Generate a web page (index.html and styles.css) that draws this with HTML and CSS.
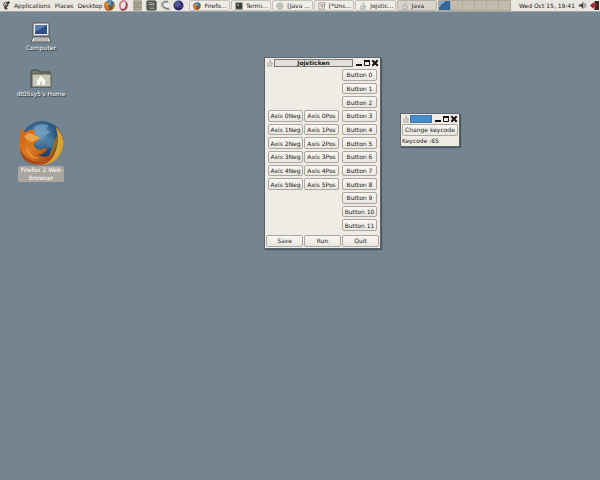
FILE: index.html
```html
<!DOCTYPE html>
<html lang="en">

<head>
    <meta charset="UTF-8">
    <meta name="viewport" content="width=device-width, initial-scale=1.0">
    <title>Desktop</title>
    <link rel="stylesheet" href="styles.css">
</head>

<body>
    <!-- shared icons -->
    <svg class="defs" aria-hidden="true">
        <defs>
            <radialGradient id="globe" cx=".45" cy=".35" r=".6">
                <stop offset="0" stop-color="#6f9fc0" />
                <stop offset=".55" stop-color="#2f5f8c" />
                <stop offset="1" stop-color="#14284a" />
            </radialGradient>
            <linearGradient id="fur" x1="0" y1="0" x2="1" y2=".6">
                <stop offset="0" stop-color="#c8641c" />
                <stop offset=".5" stop-color="#dc7a1e" />
                <stop offset="1" stop-color="#a5481a" />
            </linearGradient>
        </defs>
        <symbol id="firefox" viewBox="0 0 44 44">
            <circle cx="23" cy="21" r="20" fill="url(#globe)" />
            <path d="M16 7c3-3 9-4 13-2l-2 4 4 2-5 4-5-2-5 2-3-3z" fill="#7ba8c2" opacity=".7" />
            <path d="M27 18l6-2 3 5-4 6-5-2z" fill="#4a80a6" opacity=".7" />
            <path d="M36 7c6 5 8 12 7 18-2 11-11 18-21 18 8-3 13-9 15-17 2-7 1-13-1-19z" fill="#d9a532" />
            <path d="M38 14c1 11-4 21-13 26 5-6 8-12 9-19z" fill="#8f6a1f" />
            <path d="M3 8l4 4c3-3 6-3 8-3l1 5 5 3c-1 3-5 3-6 6 0 4 4 6 8 5l5-2c-1 5-5 7-9 7 6 4 13 2 17-4-2 9-8 14-16 14C9 43 1 34 1 23 1 17 2 12 3 8z" fill="url(#fur)" />
            <path d="M2 27c3 8 10 13 20 13-3 3-8 3-12 1-5-3-8-8-8-14z" fill="#a84917" />
            <path d="M6 16c3-4 6-4 9-2l6 3c-2 2-5 2-7 4-3 0-6-2-8-5z" fill="#eba04a" />
            <path d="M8 24c1 7 6 12 13 13-8 1-14-5-13-13z" fill="#ee9a3a" />
        </symbol>
        <symbol id="java" viewBox="0 0 10 10">
            <path d="M5 0c2 2-2 3 0 5M7 2c-1 1-1 1-1 3" fill="none" stroke="#b5a8a4" />
            <path d="M2 5h5v3H2zM7 5h1v2H7M1 9h8" fill="#dcdcdc" stroke="#a4a9ae" stroke-width=".8" />
        </symbol>
        <symbol id="min" viewBox="0 0 8 8">
            <path d="M1 6h6" stroke="#111" stroke-width="2" />
        </symbol>
        <symbol id="max" viewBox="0 0 8 8">
            <path d="M1.500 1v5.500h5V1" fill="none" stroke="#111" />
            <path d="M1 2h6" stroke="#111" stroke-width="2" />
        </symbol>
        <symbol id="close" viewBox="0 0 8 8">
            <path d="M2 2l4 4M6 2L2 6" stroke="#111" stroke-width="2" stroke-linecap="square" />
        </symbol>
    </svg>

    <header class="panel">
        <nav class="menus">
            <svg class="icon" viewBox="0 0 12 12">
                <ellipse cx="8" cy="2.500" rx="2.500" ry="1.800" fill="#333" transform="rotate(-35 8 2.500)" />
                <circle cx="2" cy="5" r=".9" fill="#333" />
                <circle cx="3" cy="3" r=".9" fill="#333" />
                <circle cx="5" cy="1.500" r=".9" fill="#333" />
                <path d="M8 6c-1-2-5-1-5 2s3 4 4 2c0-1-2-1-1-2s2-1 2-2z" fill="#555" stroke="#333" />
            </svg>
            <a href="#">Applications</a>
            <a href="#">Places</a>
            <a href="#">Desktop</a>
        </nav>
        <div class="launchers">
            <button aria-label="Firefox"><svg><use href="#firefox" /></svg></button>
            <button aria-label="Opera"><svg viewBox="0 0 12 12">
                <ellipse cx="6" cy="6" rx="4" ry="5" fill="#f0e2e2" stroke="#c9808a" stroke-width="2" />
                <path d="M3 10c4 2 7-2 6-7" fill="none" stroke="#8e3a46" stroke-width="1.500" />
            </svg></button>
            <button aria-label="Files"><svg viewBox="0 0 12 12">
                <rect x="2" y="1" width="8" height="10" fill="#b0ae98" stroke="#8b8b7a" />
                <path d="M2 4h8M2 8h8M5 6h2" stroke="#85857a" />
            </svg></button>
            <button aria-label="Editor"><svg viewBox="0 0 12 12">
                <rect x="1" y="1" width="10" height="10" rx="1" fill="#5c5f5b" stroke="#434542" />
                <path d="M3 3h4M3 5h5M4 9h5M8 3v3" stroke="#b4b8b2" />
            </svg></button>
            <button aria-label="Tools"><svg viewBox="0 0 12 12">
                <path d="M8 2C4 1 1 3 2 6s5 4 9 4" fill="none" stroke="#c8c8c4" stroke-width="3" />
                <path d="M9 2C5 1 2 3 3 6s4 3 7 4" fill="none" stroke="#555" />
            </svg></button>
            <button aria-label="Eclipse"><svg viewBox="0 0 12 12">
                <circle cx="6" cy="6" r="5.500" fill="#282863" />
                <circle cx="5" cy="4" r="3" fill="#535397" />
                <path d="M1 6h10M1 8h10" stroke="#7878ad" stroke-width=".5" />
            </svg></button>
        </div>
        <div class="tasks">
            <button><svg><use href="#firefox" /></svg>Firefo...</button>
            <button><svg viewBox="0 0 10 10">
                <rect x="1" y="1" width="8" height="8" fill="#343638" stroke="#888" />
                <path d="M3 3l2 1-2 1" fill="none" stroke="#ddd" />
            </svg>Termi...</button>
            <button><svg viewBox="0 0 10 10">
                <circle cx="5" cy="5" r="4" fill="#d8ddd7" stroke="#9ba49b" />
                <path d="M3 4h4M3 6h4" stroke="#829a92" />
            </svg>[Java ...</button>
            <button><svg viewBox="0 0 10 10">
                <path d="M1 1h7v8H1z" fill="#f5f5ef" stroke="#92948b" />
                <path d="M3 3h3M3 5h3M4 8l5-6" stroke="#8a8268" />
            </svg>[*Uns...</button>
            <button><svg><use href="#java" /></svg>Jojstic...</button>
            <button class="active"><svg><use href="#java" /></svg>Java</button>
        </div>
        <div class="pager">
            <span class="current"></span><span></span><span></span><span></span><span></span><span></span>
        </div>
        <div class="tray">
            <time>Wed Oct 15, 19:41</time>
            <svg viewBox="0 0 10 10">
                <path d="M1 4h2l3-3v8L3 6H1z" fill="#444a4e" />
                <path d="M7 3q1 2 0 4M8 2q2 3 0 6" fill="none" stroke="#778" stroke-width=".8" />
            </svg>
            <svg viewBox="0 0 10 10">
                <path d="M5 0h5v10H5z" fill="#3b2422" />
                <path d="M0 5l4-4v2h3v4H4v2z" fill="#9d2b27" />
            </svg>
        </div>
    </header>

    <main class="desktop">
        <div class="shortcuts">
            <a href="#" class="shortcut">
                <svg class="small" viewBox="0 0 22 22">
                    <rect x="3" y="1" width="16" height="13" rx="1" fill="#e7e9e4" stroke="#4d5358" />
                    <rect x="5" y="3" width="12" height="9" fill="#2d4e82" />
                    <path d="M5 3h12L5 10z" fill="#5e80b0" />
                    <path d="M3 15h16l2 5H1z" fill="#e0e1dc" stroke="#50565a" />
                    <path d="M4 17h14M4 19h14" stroke="#8c9190" />
                </svg>
                <span>Computer</span>
            </a>
            <a href="#" class="shortcut">
                <svg class="small" viewBox="0 0 22 22">
                    <path d="M1 4l1-2h6l1 2h11v15H1z" fill="#77786d" stroke="#44483f" />
                    <path d="M2 6h19v13H2z" fill="#c9c8b6" stroke="#5b5e53" />
                    <path d="M6 13l5-5 5 5h-1v4h-3v-3h-2v3H7v-4z" fill="#fafaf3" />
                </svg>
                <span>dt05sy5's Home</span>
            </a>
            <a href="#" class="shortcut selected">
                <svg class="large"><use href="#firefox" /></svg>
                <span>Firefox 2 Web Browser</span>
            </a>
        </div>

        <section class="window joystick">
            <div class="titlebar">
                <svg class="app"><use href="#java" /></svg>
                <h1>Jojsticken</h1>
                <button aria-label="Minimize"><svg><use href="#min" /></svg></button>
                <button aria-label="Maximize"><svg><use href="#max" /></svg></button>
                <button aria-label="Close"><svg><use href="#close" /></svg></button>
            </div>
            <div class="mapping">
                <div class="axes">
                    <button class="key">Axis 0Neg</button>
                    <button class="key">Axis 0Pos</button>
                    <button class="key">Axis 1Neg</button>
                    <button class="key">Axis 1Pos</button>
                    <button class="key">Axis 2Neg</button>
                    <button class="key">Axis 2Pos</button>
                    <button class="key">Axis 3Neg</button>
                    <button class="key">Axis 3Pos</button>
                    <button class="key">Axis 4Neg</button>
                    <button class="key">Axis 4Pos</button>
                    <button class="key">Axis 5Neg</button>
                    <button class="key">Axis 5Pos</button>
                </div>
                <div class="buttons">
                    <button class="key">Button 0</button>
                    <button class="key">Button 1</button>
                    <button class="key">Button 2</button>
                    <button class="key">Button 3</button>
                    <button class="key">Button 4</button>
                    <button class="key">Button 5</button>
                    <button class="key">Button 6</button>
                    <button class="key">Button 7</button>
                    <button class="key">Button 8</button>
                    <button class="key">Button 9</button>
                    <button class="key">Button 10</button>
                    <button class="key">Button 11</button>
                </div>
            </div>
            <div class="actions">
                <button class="key">Save</button>
                <button class="key">Run</button>
                <button class="key">Quit</button>
            </div>
        </section>

        <section class="window keycode">
            <div class="titlebar focused">
                <svg class="app"><use href="#java" /></svg>
                <h1></h1>
                <button aria-label="Minimize"><svg><use href="#min" /></svg></button>
                <button aria-label="Maximize"><svg><use href="#max" /></svg></button>
                <button aria-label="Close"><svg><use href="#close" /></svg></button>
            </div>
            <button class="key">Change keycode</button>
            <p>Keycode :65</p>
        </section>
    </main>
</body>

</html>
```
FILE: styles.css
```css
* {
    box-sizing: border-box;
}

body {
    margin: 0;
    min-height: 100vh;
    display: flex;
    flex-direction: column;
    background-color: #748490;
    color: #222;
    font-family: "DejaVu Sans", sans-serif;
    font-size: 6px;
    line-height: 8px;
}

button {
    margin: 0;
    padding: 0;
    border: none;
    background: none;
    color: inherit;
    font: inherit;
    white-space: nowrap;
}

a {
    color: inherit;
    text-decoration: none;
}

svg {
    display: block;
    flex: none;
}

.defs {
    position: absolute;
    width: 0;
    height: 0;
}

/* top panel */
.panel {
    display: flex;
    align-items: center;
    height: 12px;
    background-color: #eae7e1;
    border-bottom: 1px solid #a5a8a6;
    white-space: nowrap;
}

.menus {
    display: flex;
    align-items: center;
    gap: 4px;
    padding-left: 2px;
}

.menus .icon {
    width: 9px;
    height: 9px;
    margin-right: -1px;
}

.launchers {
    display: flex;
    justify-content: space-between;
    width: 87px;
    padding: 0 5px 0 2px;
}

.launchers svg {
    width: 11px;
    height: 11px;
}

.tasks {
    flex: 1;
    display: grid;
    grid-template-columns: repeat(6, 1fr);
    gap: 1px;
}

.tasks button {
    display: flex;
    align-items: center;
    gap: 3px;
    height: 11px;
    padding-left: 3px;
    border: 1px solid #c5c1b9;
    border-radius: 2px;
    background-color: #efede8;
    overflow: hidden;
}

.tasks .active {
    background-color: #d9d5cc;
    border-color: #b5b0a6;
}

.tasks svg {
    width: 8px;
    height: 8px;
}

.pager {
    display: flex;
    gap: 1px;
    margin-left: 1px;
    padding: 1px;
    background-color: #b0a798;
}

.pager span {
    width: 11px;
    height: 9px;
    background-color: #c4baab;
}

.pager .current {
    background: linear-gradient(135deg, #8aadcf 30%, #33689f 30%);
}

.tray {
    display: flex;
    align-items: center;
    gap: 3px;
    padding: 0 1px 0 8px;
}

.tray svg {
    width: 9px;
    height: 9px;
}

/* desktop */
.desktop {
    position: relative;
    flex: 1;
}

.shortcuts {
    display: flex;
    flex-direction: column;
    gap: 16px;
    width: 82px;
    padding-top: 10px;
}

.shortcut {
    display: flex;
    flex-direction: column;
    align-items: center;
    color: #fff;
    text-align: center;
    text-shadow: 1px 1px 1px #222;
}

.small {
    width: 22px;
    height: 22px;
}

.large {
    width: 46px;
    height: 46px;
}

.selected {
    margin-top: 6px;
}

.selected span {
    width: 46px;
    border-radius: 2px;
    background-color: #aaa69d;
    text-shadow: none;
}

.window {
    position: absolute;
    display: flex;
    flex-direction: column;
    padding: 0 1px 1px;
    border: 1px solid #5a646c;
    background-color: #efece6;
    box-shadow: 1px 1px 1px #4d5961;
}

.joystick {
    left: 264px;
    top: 45px;
}

.keycode {
    left: 400px;
    top: 101px;
}

.titlebar {
    display: flex;
    align-items: center;
    height: 9px;
}

.titlebar h1 {
    flex: 1;
    height: 8px;
    margin: 0 2px 0 0;
    border: 1px solid #777;
    background-color: #e1dfda;
    font-size: 6px;
    line-height: 6px;
    text-align: center;
}

.focused h1 {
    border-color: #3c76ad;
    background-color: #4a8cc8;
}

.titlebar svg {
    width: 8px;
    height: 8px;
}

.key {
    border: 1px solid #aaa79f;
    border-radius: 2px;
    background: linear-gradient(#f8f7f4, #e9e6df);
    line-height: 10px;
}

.mapping {
    display: flex;
    align-items: center;
    gap: 3px;
    padding: 2px;
    margin-bottom: 2px;
}

.axes,
.buttons {
    display: grid;
    grid-auto-rows: 1fr;
    gap: 2px 1px;
}

/* six rows, as tall as half of the button column */
.axes {
    grid-template-columns: 35px 35px;
    height: 80px;
}

.buttons {
    grid-template-columns: 35px;
    height: 162px;
}

.mapping .key {
    line-height: 9px;
}

.actions {
    display: grid;
    grid-template-columns: repeat(3, 1fr);
    gap: 1px;
}

.keycode .key {
    margin-top: 1px;
    padding: 0 2px;
}

.keycode p {
    margin: 1px 0 0;
}
```
